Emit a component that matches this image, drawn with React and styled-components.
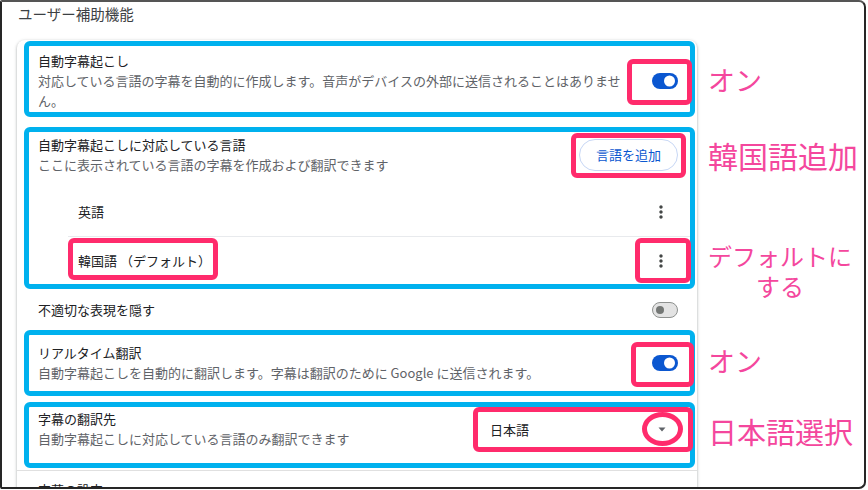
import React from 'react';
import styled, { createGlobalStyle, css } from 'styled-components';

const GlobalStyle = createGlobalStyle`
  html, body { margin: 0; padding: 0; background: #fff; }
  body { font-family: "Noto Sans CJK JP", "Noto Sans", sans-serif; }
`;

const Frame = styled.div`
  box-sizing: border-box;
  width: 866px;
  height: 489px;
  border: 2px solid #262626;
  border-top-color: #555;
  border-radius: 2px 7px 7px 2px;
  overflow: hidden;
  padding: 2px 0 0 15px;
  background: #fff;
`;

const PageTitle = styled.h2`
  margin: 0 0 16px 1px;
  font-size: 14.5px;
  line-height: 20px;
  font-weight: 400;
  color: #3c4043;
`;

const Card = styled.section`
  box-sizing: border-box;
  width: 680px;
  padding: 1px 2px 0 7px;
  background: #fff;
  border-radius: 8px;
  box-shadow: 0 1px 2px rgba(60, 64, 67, 0.3), 0 1px 3px 1px rgba(60, 64, 67, 0.15);
  min-height: 480px;
`;

const highlight = css`
  border: 5px solid #00b1ee;
  border-radius: 6px;
`;

const Row = styled.div`
  position: relative;
  display: flex;
  align-items: center;
  box-sizing: border-box;
  margin-top: ${(p) => p.$gap || 0}px;
  padding: ${(p) => p.$pad};
  min-height: ${(p) => p.$minH || 0}px;
  ${(p) => p.$highlight && highlight}
`;

const Section = styled.div`
  position: relative;
  display: flex;
  flex-direction: column;
  margin-top: 10px;
  padding: 3px 0 0 9px;
  ${highlight}
`;

const Header = styled.div`
  display: flex;
  align-items: center;
  padding-right: 12px;
`;

const TextBlock = styled.div`
  flex: 1;
  min-width: 0;
  margin-right: 24px;
`;

const Label = styled.div`
  font-size: 13px;
  line-height: 20px;
  color: #202124;
`;

const Sub = styled.div`
  font-size: 13px;
  line-height: 20px;
  color: #5f6368;
`;

const Mark = styled.span`
  position: relative;
  display: inline-flex;
  align-items: center;
  &::after {
    content: '';
    position: absolute;
    top: -${(p) => p.$t}px;
    right: -${(p) => p.$r}px;
    bottom: -${(p) => p.$b}px;
    left: -${(p) => p.$l}px;
    border: 5px solid #ff2b6c;
    border-radius: ${(p) => (p.$round ? '50%' : '6px')};
    pointer-events: none;
  }
`;

const Toggle = styled.span`
  position: relative;
  display: block;
  box-sizing: border-box;
  width: 26px;
  height: 16px;
  border-radius: 8px;
  background: ${(p) => (p.$on ? '#0b57d0' : '#e3e3e3')};
  border: ${(p) => (p.$on ? 'none' : '1px solid #8e918f')};
  &::before {
    content: '';
    position: absolute;
    top: 50%;
    transform: translateY(-50%);
    border-radius: 50%;
    width: ${(p) => (p.$on ? 11 : 8)}px;
    height: ${(p) => (p.$on ? 11 : 8)}px;
    background: ${(p) => (p.$on ? '#fff' : '#747775')};
    ${(p) => (p.$on ? 'right: 3px;' : 'left: 3px;')}
  }
`;

const AddButton = styled.button`
  box-sizing: border-box;
  height: 32px;
  padding: 0 16px;
  border: 1px solid #c7d7f5;
  border-radius: 16px;
  background: #fff;
  color: #0b57d0;
  font-family: inherit;
  font-size: 13px;
  line-height: 20px;
`;

const LangList = styled.div`
  margin: 13px 0 0 30px;
`;

const LangRow = styled.div`
  box-sizing: border-box;
  height: 48px;
  display: flex;
  align-items: center;
  justify-content: space-between;
  padding: 0 19px 0 10px;
  font-size: 13px;
  line-height: 20px;
  color: #202124;
  border-top: ${(p) => (p.$divider ? '1px solid #e8eaed' : 'none')};
`;

const Kebab = styled.svg`
  display: block;
  width: 20px;
  height: 20px;
  fill: #444746;
`;

const Select = styled.div`
  box-sizing: border-box;
  width: 200px;
  height: 32px;
  display: flex;
  align-items: center;
  justify-content: space-between;
  padding: 0 11px 0 12px;
  background: #fff;
  font-size: 13px;
  color: #202124;
`;

const Caret = styled.svg`
  display: block;
  width: 10px;
  height: 5px;
  fill: #5f6368;
`;

const Callout = styled.div`
  position: absolute;
  left: calc(100% + 18px);
  top: ${(p) => p.$top}px;
  font-size: ${(p) => p.$size}px;
  line-height: ${(p) => p.$lh}px;
  color: #f4479d;
  white-space: nowrap;
  text-align: center;
`;

const CalloutLine = styled.div`
  height: ${(p) => p.$h}px;
`;

const LastRow = styled.div`
  margin: 2px -2px 0 -7px;
  padding: 9px 0 0 21px;
  border-top: 1px solid #e0e0e0;
  font-size: 13px;
  line-height: 20px;
  color: #202124;
`;

const MoreVert = () => (
  <Kebab viewBox="0 0 24 24">
    <path d="M12 8c1.1 0 2-.9 2-2s-.9-2-2-2-2 .9-2 2 .9 2 2 2zm0 2c-1.1 0-2 .9-2 2s.9 2 2 2 2-.9 2-2-.9-2-2-2zm0 6c-1.1 0-2 .9-2 2s.9 2 2 2 2-.9 2-2-.9-2-2-2z" />
  </Kebab>
);

export default function App() {
  return (
    <>
      <GlobalStyle />
      <Frame>
        <PageTitle>ユーザー補助機能</PageTitle>
        <Card>
          <Row $highlight $pad="5px 12px 1px 9px">
            <TextBlock>
              <Label>自動字幕起こし</Label>
              <Sub>対応している言語の字幕を自動的に作成します。音声がデバイスの外部に送信されることはありません。</Sub>
            </TextBlock>
            <Mark $t={14} $r={14} $b={16} $l={25}>
              <Toggle $on />
            </Mark>
            <Callout $top={18} $size={27} $lh={32}>オン</Callout>
          </Row>

          <Section>
            <Header>
              <TextBlock>
                <Label>自動字幕起こしに対応している言語</Label>
                <Sub>ここに表示されている言語の字幕を作成および翻訳できます</Sub>
              </TextBlock>
              <Mark $t={6} $r={8} $b={7} $l={8}>
                <AddButton>言語を追加</AddButton>
              </Mark>
            </Header>
            <LangList>
              <LangRow>
                <span>英語</span>
                <MoreVert />
              </LangRow>
              <LangRow $divider>
                <Mark $t={13} $r={7} $b={9} $l={10}>
                  <span>韓国語 （デフォルト）</span>
                </Mark>
                <Mark $t={13} $r={20} $b={12} $l={16}>
                  <MoreVert />
                </Mark>
              </LangRow>
            </LangList>
            <Callout $top={6} $size={30} $lh={34}>韓国語追加</Callout>
            <Callout $top={106} $size={24} $lh={36}>
              <CalloutLine $h={30}>デフォルトに</CalloutLine>
              <CalloutLine $h={36}>する</CalloutLine>
            </Callout>
          </Section>

          <Row $pad="0 17px 0 14px" $minH={41}>
            <TextBlock>
              <Label>不適切な表現を隠す</Label>
            </TextBlock>
            <Toggle />
          </Row>

          <Row $highlight $pad="8px 12px 8px 9px">
            <TextBlock>
              <Label>リアルタイム翻訳</Label>
              <Sub>自動字幕起こしを自動的に翻訳します。字幕は翻訳のために Google に送信されます。</Sub>
            </TextBlock>
            <Mark $t={13} $r={16} $b={16} $l={21}>
              <Toggle $on />
            </Mark>
            <Callout $top={10} $size={27} $lh={32}>オン</Callout>
          </Row>

          <Row $highlight $gap={6} $pad="2px 12px 14px 9px">
            <TextBlock>
              <Label>字幕の翻訳先</Label>
              <Sub>自動字幕起こしに対応している言語のみ翻訳できます</Sub>
            </TextBlock>
            <Mark $t={6} $r={15} $b={7} $l={5}>
              <Select>
                <span>日本語</span>
                <Mark $t={15} $r={16} $b={14} $l={15} $round>
                  <Caret viewBox="0 0 10 5">
                    <polygon points="1.5,0.5 8.5,0.5 5,4.5" />
                  </Caret>
                </Mark>
              </Select>
            </Mark>
            <Callout $top={7} $size={29} $lh={34}>日本語選択</Callout>
          </Row>

          <LastRow>字幕の設定</LastRow>
        </Card>
      </Frame>
    </>
  );
}
